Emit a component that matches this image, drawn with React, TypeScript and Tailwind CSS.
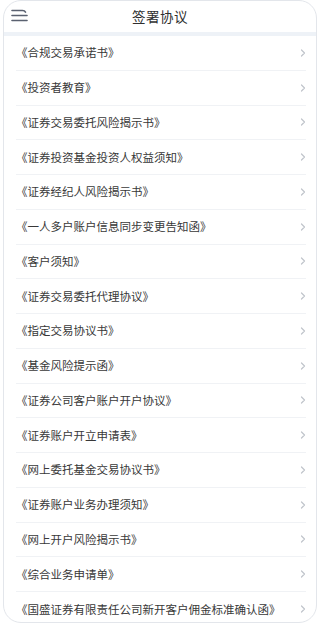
import React from "react"

const items = [
  "《合规交易承诺书》",
  "《投资者教育》",
  "《证券交易委托风险揭示书》",
  "《证券投资基金投资人权益须知》",
  "《证券经纪人风险揭示书》",
  "《一人多户账户信息同步变更告知函》",
  "《客户须知》",
  "《证券交易委托代理协议》",
  "《指定交易协议书》",
  "《基金风险提示函》",
  "《证券公司客户账户开户协议》",
  "《证券账户开立申请表》",
  "《网上委托基金交易协议书》",
  "《证券账户业务办理须知》",
  "《网上开户风险揭示书》",
  "《综合业务申请单》",
  "《国盛证券有限责任公司新开客户佣金标准确认函》",
]

function MenuIcon() {
  return (
    <svg width="17" height="13" viewBox="0 0 17 13" fill="none" stroke="#5a6170" strokeWidth="1.6" strokeLinecap="round">
      <path d="M1 1.5h10.5c1.5 0 2.5 0.6 3 1.6" />
      <path d="M1 6.5h15" />
      <path d="M1 11.5h15" />
    </svg>
  )
}

function Chevron() {
  return (
    <svg width="6" height="10" viewBox="0 0 6 10" fill="none" stroke="#c0c4cb" strokeWidth="1.2" strokeLinecap="round" strokeLinejoin="round">
      <path d="M1.5 2L4.5 5L1.5 8" />
    </svg>
  )
}

export default function App() {
  return (
    <div
      className="w-[320px] h-[624px] bg-white px-[3px] overflow-hidden"
      style={{ fontFamily: '"Noto Sans CJK SC", "Noto Sans", sans-serif' }}
    >
      <div className="h-[623px] border border-[#e3e6eb] rounded-[18px] overflow-hidden flex flex-col bg-white">
        {/* header */}
        <div className="h-[31px] flex items-center relative shrink-0">
          <div className="absolute left-[7px] top-[8px]">
            <MenuIcon />
          </div>
          <div className="flex-1 text-center text-[13.5px] text-[#2f2f2f] tracking-[0.5px]">签署协议</div>
        </div>
        <div className="h-[4px] bg-[#eef2f7] shrink-0" />

        {/* list */}
        <div className="flex flex-col">
          {items.map((t, i) => (
            <div key={i} className="h-[34.75px] shrink-0 flex items-center pl-[12px] pr-[10px]">
              <div className={`flex-1 h-full flex items-center justify-between ${i < items.length - 1 ? "border-b border-[#f0f2f5]" : ""}`}>
                <span className="text-[11.5px] text-[#383838] whitespace-nowrap">{t}</span>
                <Chevron />
              </div>
            </div>
          ))}
        </div>
      </div>
    </div>
  )
}
